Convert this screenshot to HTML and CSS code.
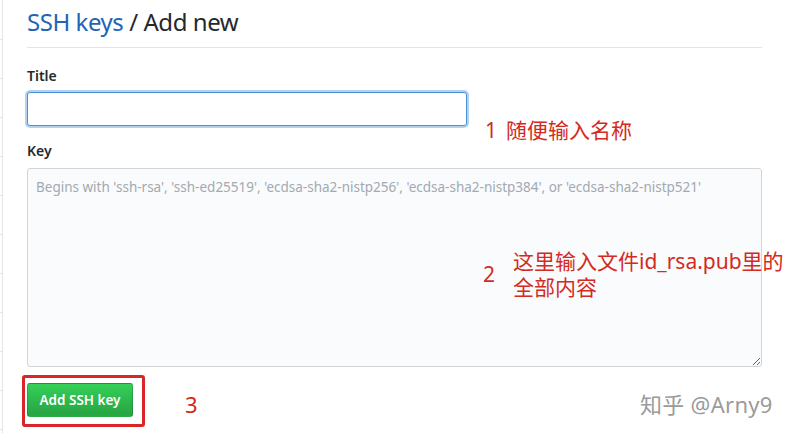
FILE: index.html
```html
<!DOCTYPE html>
<html lang="zh-CN">
<head>
<meta charset="utf-8">
<link rel="stylesheet" href="styles.css">
</head>
<body>
<div class="page">
  <aside class="sidebar">
    <div class="nav-item"></div><div class="nav-item"></div><div class="nav-item"></div>
    <div class="nav-item"></div><div class="nav-item"></div><div class="nav-item"></div>
    <div class="nav-item"></div><div class="nav-item"></div><div class="nav-item"></div>
    <div class="nav-item"></div><div class="nav-item"></div>
  </aside>
  <main class="main">
    <h2 class="subhead"><a class="crumb" href="#">SSH keys</a> / Add new</h2>
    <form class="form">
      <label class="label" for="title">Title</label>
      <input class="input focused" id="title" type="text">
      <label class="label key-label" for="key">Key</label>
      <textarea class="textarea" id="key" placeholder="Begins with 'ssh-rsa', 'ssh-ed25519', 'ecdsa-sha2-nistp256', 'ecdsa-sha2-nistp384', or 'ecdsa-sha2-nistp521'"></textarea>
      <div class="actions">
        <div class="highlight"><button class="btn-primary" type="button">Add SSH key</button></div>
        <span class="note note-3">3</span>
      </div>
    </form>
    <div class="note note-1"><span class="num">1</span>随便输入名称</div>
    <div class="note note-2"><span class="num">2</span><span class="note-text">这里输入文件id_rsa.pub里的<br>全部内容</span></div>
    <div class="watermark">知乎 @Arny9</div>
  </main>
</div>
</body>
</html>
```
FILE: styles.css
```css
html, body { margin: 0; padding: 0; background: #fff; }
body {
  font-family: "Noto Sans", "Noto Sans CJK SC", sans-serif;
  color: #24292e;
  width: 798px;
  height: 439px;
  overflow: hidden;
}
.page { display: flex; height: 439px; }
.sidebar {
  width: 2px;
  height: 433px;
  border-right: 1px solid #e1e4e8;
  display: flex;
  flex-direction: column;
}
.nav-item { height: 38px; border-bottom: 1px solid #e1e4e8; flex: none; }
.nav-item:first-child { height: 39px; }
.main { position: relative; margin-left: 24px; width: 735px; }
.subhead {
  margin: 0;
  padding: 6px 0 9px;
  font-size: 24px;
  font-weight: 400;
  line-height: 32px;
  border-bottom: 1px solid #e1e4e8;
  letter-spacing: -0.45px;
  white-space: nowrap;
}
.crumb { text-decoration: none; color: #2264b5; }
.form { display: flex; flex-direction: column; align-items: flex-start; padding-top: 17px; }
.label { font-size: 14px; font-weight: 600; line-height: 22px; margin-bottom: 5px; }
.key-label { margin-top: 14px; margin-bottom: 6px; }
.input {
  box-sizing: border-box;
  width: 440px;
  height: 34px;
  margin: 0;
  border: 1px solid #4a8fd9;
  border-radius: 3px;
  background: #fff;
  outline: none;
}
.input.focused { box-shadow: 0 0 0 2px rgba(3, 102, 214, 0.3); }
.textarea {
  box-sizing: border-box;
  width: 735px;
  height: 199px;
  margin: 0;
  padding: 8px 8px;
  border: 1px solid #d1d5da;
  border-radius: 3px;
  background: #fafbfc;
  font-family: "Noto Sans", sans-serif;
  font-size: 13.5px;
  line-height: 20px;
  resize: vertical;
}
.textarea::placeholder { color: #a3a9b0; }
.actions { display: flex; align-items: center; margin-top: 8px; margin-left: -5px; }
.highlight {
  border: 3px solid #d8262a;
  border-radius: 3px;
  padding: 5px 9px 7px 2px;
  display: flex;
}
.btn-primary {
  width: 106px;
  height: 34px;
  border: 1px solid rgba(27, 31, 35, 0.2);
  border-radius: 3px;
  background: linear-gradient(#34d058, #28a745 90%);
  color: #fff;
  font-family: "Noto Sans", sans-serif;
  font-size: 13.5px;
  font-weight: 600;
  padding: 0;
}
.note {
  color: #d32a22;
  font-size: 21px;
  font-family: "Noto Sans", "Noto Sans CJK SC", sans-serif;
  line-height: 28px;
  white-space: nowrap;
}
.note-3 { margin-left: 40px; font-size: 22px; margin-top: 6px; }
.note-1 { position: absolute; left: 458px; top: 116px; display: flex; }
.note-1 .num { margin-right: 9px; }
.note-2 { position: absolute; left: 456px; top: 248px; display: flex; align-items: center; }
.note-2 .num { margin-right: 18px; margin-top: 0; }
.note-text { line-height: 26px; font-size: 21px; }
.watermark {
  position: absolute;
  left: 613px;
  top: 387px;
  font-size: 22px;
  color: #9b9b9b;
  white-space: nowrap;
  text-shadow: 1px 1px 0 #fff, -1px -1px 0 #fff, 1px -1px 0 #fff, -1px 1px 0 #fff;
  letter-spacing: 0.3px;
}
```
